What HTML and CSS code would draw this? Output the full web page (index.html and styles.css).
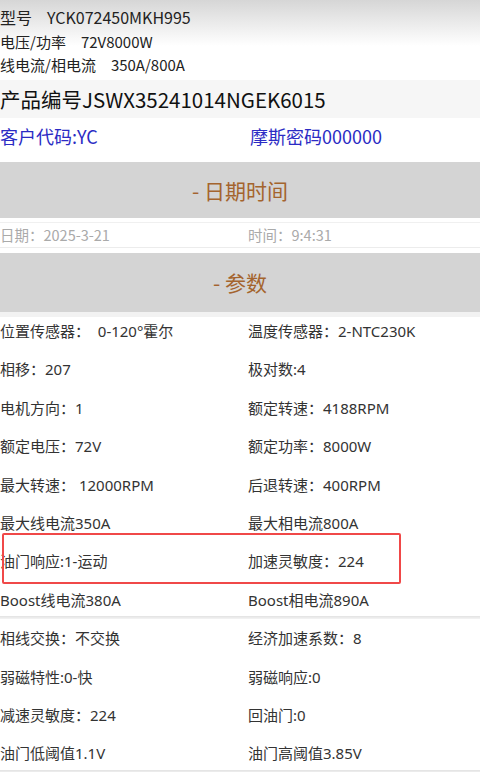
FILE: index.html
```html
<!DOCTYPE html>
<html>
  <head>
    <title>控制器参数</title>
    <link rel="stylesheet" href="styles.css">
  </head>
  <body>
    <!-- Model info -->
    <div class="model">
      <div class="model-row first">型号<span class="val">YCK072450MKH995</span></div>
      <div class="model-row">电压/功率<span class="val">72V8000W</span></div>
      <div class="model-row">线电流/相电流<span class="val">350A/800A</span></div>
    </div>

    <div class="product">产品编号JSWX35241014NGEK6015</div>

    <div class="customer">
      <span class="col">客户代码:YC</span>
      <span class="col right">摩斯密码000000</span>
    </div>

    <!-- Date and time -->
    <div class="section-head">- 日期时间</div>
    <div class="date-row">
      <span class="col">日期：2025-3-21</span>
      <span class="col right">时间：9:4:31</span>
    </div>

    <!-- Parameters -->
    <div class="section-head params-head">- 参数</div>
    <div class="params">
      <div class="param-row">
        <span class="col">位置传感器：&nbsp;&nbsp;0-120°霍尔</span>
        <span class="col right">温度传感器：2-NTC230K</span>
      </div>
      <div class="param-row">
        <span class="col">相移：207</span>
        <span class="col right">极对数:4</span>
      </div>
      <div class="param-row">
        <span class="col">电机方向：1</span>
        <span class="col right">额定转速：4188RPM</span>
      </div>
      <div class="param-row">
        <span class="col">额定电压：72V</span>
        <span class="col right">额定功率：8000W</span>
      </div>
      <div class="param-row">
        <span class="col">最大转速：&nbsp;12000RPM</span>
        <span class="col right">后退转速：400RPM</span>
      </div>
      <div class="param-row">
        <span class="col">最大线电流350A</span>
        <span class="col right">最大相电流800A</span>
      </div>
      <div class="param-row">
        <span class="col">油门响应:1-运动</span>
        <span class="col right">加速灵敏度：224</span>
        <div class="highlight"></div>
      </div>
      <div class="param-row">
        <span class="col">Boost线电流380A</span>
        <span class="col right">Boost相电流890A</span>
      </div>
      <div class="divider"></div>
      <div class="param-row">
        <span class="col">相线交换：不交换</span>
        <span class="col right">经济加速系数：8</span>
      </div>
      <div class="param-row">
        <span class="col">弱磁特性:0-快</span>
        <span class="col right">弱磁响应:0</span>
      </div>
      <div class="param-row">
        <span class="col">减速灵敏度：224</span>
        <span class="col right">回油门:0</span>
      </div>
      <div class="param-row">
        <span class="col">油门低阈值1.1V</span>
        <span class="col right">油门高阈值3.85V</span>
      </div>
      <div class="divider"></div>
    </div>
  </body>
</html>
```

FILE: styles.css
```css
/* Controller parameter screen */
body {
  margin: 0;
  font-family: "Noto Sans CJK SC", "Noto Sans", sans-serif;
  background-color: #fff;
  color: #333;
  overflow: hidden;
}

.model {
  background: linear-gradient(#d6d6d6 0px, #e8e8e8 20px, #fff 46px);
  padding-top: 4px;
}

.model-row {
  font-size: 15px;
  line-height: 23px;
  height: 23px;
  color: #222;
}

.model-row .val {
  margin-left: 15px;
}

.model-row.first {
  font-size: 16px;
  line-height: 26px;
  height: 26px;
}

.product {
  margin-top: 4px;
  background-color: #f6f6f6;
  font-size: 20.5px;
  line-height: 38px;
  height: 38px;
  color: #111;
}

.customer {
  display: flex;
  font-size: 18px;
  line-height: 36px;
  height: 36px;
  color: #2b2bc4;
  margin-bottom: 8px;
}

.col {
  flex-shrink: 0;
  width: 248px;
  white-space: nowrap;
}

.customer .col {
  width: 250px;
}

.customer .right {
  width: auto;
}

.section-head {
  background-color: #d4d4d4;
  color: #a4642e;
  font-size: 21px;
  height: 56px;
  line-height: 56px;
  text-align: center;
}

.date-row {
  display: flex;
  margin-top: 4px;
  font-size: 14.5px;
  line-height: 24px;
  height: 24px;
  color: #aaa;
  border-top: 1px solid #f0f0f0;
  border-bottom: 1px solid #ececec;
  margin-bottom: 5px;
}

.date-row .right {
  width: auto;
}

.params-head {
  height: 59px;
  line-height: 59px;
  box-shadow: 0 5px 0 #f2f2f2;
}

.param-row {
  position: relative;
  display: flex;
  font-family: "Noto Sans", "Noto Sans CJK SC", sans-serif;
  font-size: 15px;
  height: 38.4px;
  line-height: 38.4px;
  color: #333;
}

.param-row .right {
  width: auto;
}

.highlight {
  position: absolute;
  left: 2px;
  top: -9px;
  width: 395px;
  height: 47px;
  border: 2px solid #f04848;
  border-radius: 2px;
}

.divider {
  position: relative;
  height: 3px;
  margin-top: -3px;
  background: linear-gradient(#e2e2e2, #f4f4f4);
}
```
